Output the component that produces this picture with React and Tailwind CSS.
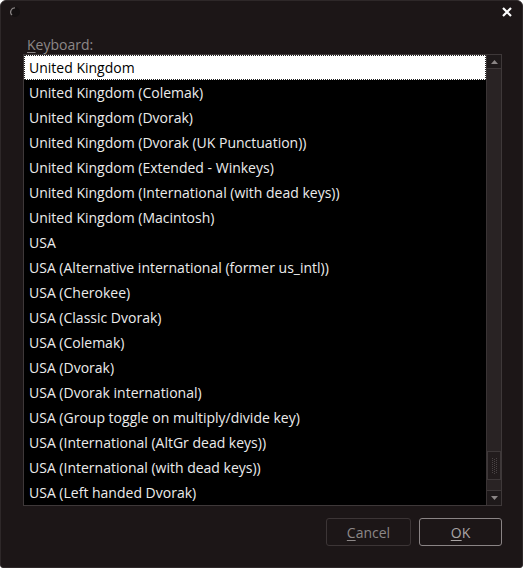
import React from "react";

const items = [
  "United Kingdom",
  "United Kingdom (Colemak)",
  "United Kingdom (Dvorak)",
  "United Kingdom (Dvorak (UK Punctuation))",
  "United Kingdom (Extended - Winkeys)",
  "United Kingdom (International (with dead keys))",
  "United Kingdom (Macintosh)",
  "USA",
  "USA (Alternative international (former us_intl))",
  "USA (Cherokee)",
  "USA (Classic Dvorak)",
  "USA (Colemak)",
  "USA (Dvorak)",
  "USA (Dvorak international)",
  "USA (Group toggle on multiply/divide key)",
  "USA (International (AltGr dead keys))",
  "USA (International (with dead keys))",
  "USA (Left handed Dvorak)",
];

export default function App() {
  return (
    <div
      className="w-[524px] h-[569px] bg-white"
      style={{ fontFamily: '"Open Sans", "Noto Sans", sans-serif' }}
    >
      <div className="w-[523px] h-[568px] bg-[#1c1617] rounded-t-[6px] rounded-b-[3px] border border-[#2e2829] flex flex-col">
        {/* title bar */}
        <div className="h-[22px] flex items-center justify-between pl-[8px] pr-[8px]">
          <svg width="12" height="12" viewBox="0 0 12 12">
            <circle cx="6" cy="6" r="5" fill="#141011" />
            <path d="M3 9 A4 4 0 0 1 6 2" stroke="#8a8585" strokeWidth="1.2" fill="none" />
          </svg>
          <svg width="12" height="12" viewBox="0 0 12 12" className="mr-[1px]">
            <path d="M2 2 L10 10 M10 2 L2 10" stroke="#ffffff" strokeWidth="2.2" />
          </svg>
        </div>
        <div className="pl-[22px] pr-[20px] pt-[13px] flex flex-col">
          <div className="text-[14px] leading-[18px] text-[#8c8787] pl-[4px] h-[18px]">
            <span className="underline underline-offset-2">K</span>eyboard:
          </div>
          <div className="flex border border-[#3e3839] h-[452px]">
            <div className="flex-1 bg-black flex flex-col">
              {items.map((t, i) => (
                <div
                  key={t}
                  className={
                    i === 0
                      ? "h-[25px] shrink-0 bg-white text-black border border-dotted border-[#222] px-[4px] flex items-center text-[14px]"
                      : "h-[25px] shrink-0 text-[#ececec] px-[5px] flex items-center text-[14px]"
                  }
                >
                  {t}
                </div>
              ))}
            </div>
            <div className="w-[15px] bg-[#231d1e] border-l border-[#3a3435] flex flex-col">
              <div className="h-[14px] border-b border-[#3e3839] bg-[#1e191a] flex items-center justify-center">
                <svg width="7" height="4" viewBox="0 0 7 4">
                  <path d="M0 4 L3.5 0 L7 4 Z" fill="#8a8585" />
                </svg>
              </div>
              <div className="flex-1 flex flex-col bg-[#292324]">
                <div className="h-[382px]" />
                <div className="h-[29px] border border-[#3e3839] bg-[#221c1d] flex items-center justify-center">
                  <svg width="7" height="18" viewBox="0 0 7 18">
                    {[0, 1, 2, 3, 4, 5, 6, 7].map((k) => (
                      <g key={k}>
                        <rect x="1" y={1 + k * 2} width="1" height="1" fill="#4a4445" />
                        <rect x="5" y={1 + k * 2} width="1" height="1" fill="#4a4445" />
                        <rect x="3" y={2 + k * 2} width="1" height="1" fill="#4a4445" />
                      </g>
                    ))}
                  </svg>
                </div>
                <div className="flex-1" />
              </div>
              <div className="h-[15px] border-t border-[#3e3839] bg-[#1e191a] flex items-center justify-center">
                <svg width="7" height="4" viewBox="0 0 7 4">
                  <path d="M0 0 L7 0 L3.5 4 Z" fill="#8a8585" />
                </svg>
              </div>
            </div>
          </div>
          <div className="flex justify-end gap-[8px] mt-[12px]">
            <button className="w-[85px] h-[28px] rounded-[3px] border border-[#3c3536] bg-[#1c1617] text-[#8c8787] text-[14px]">
              <span className="underline underline-offset-2">C</span>ancel
            </button>
            <button className="w-[83px] h-[28px] rounded-[3px] border border-[#8a8485] bg-[#1c1617] text-[#a9a4a4] text-[14px]">
              <span className="underline underline-offset-2">O</span>K
            </button>
          </div>
        </div>
      </div>
    </div>
  );
}
